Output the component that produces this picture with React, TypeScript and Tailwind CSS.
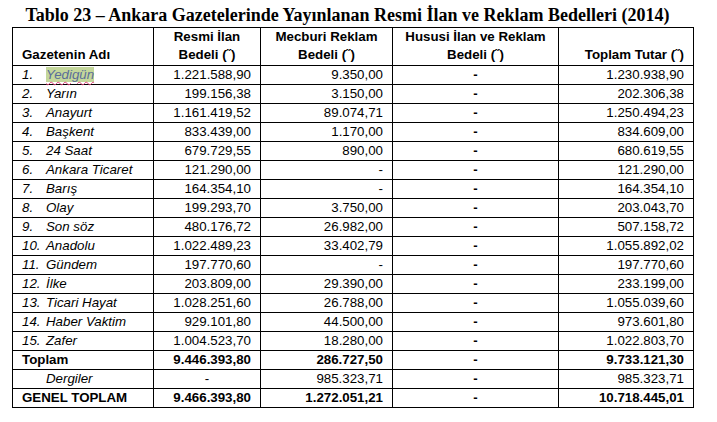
import React from 'react';

type Row = { no?: string; name: string; resmi: string; mecburi: string; hususi: string; toplam: string; kind?: 'bold' | 'sub' | 'hl' };

const rows: Row[] = [
  { no: '1.', name: 'Yedigün', resmi: '1.221.588,90', mecburi: '9.350,00', hususi: '-', toplam: '1.230.938,90', kind: 'hl' },
  { no: '2.', name: 'Yarın', resmi: '199.156,38', mecburi: '3.150,00', hususi: '-', toplam: '202.306,38' },
  { no: '3.', name: 'Anayurt', resmi: '1.161.419,52', mecburi: '89.074,71', hususi: '-', toplam: '1.250.494,23' },
  { no: '4.', name: 'Başkent', resmi: '833.439,00', mecburi: '1.170,00', hususi: '-', toplam: '834.609,00' },
  { no: '5.', name: '24 Saat', resmi: '679.729,55', mecburi: '890,00', hususi: '-', toplam: '680.619,55' },
  { no: '6.', name: 'Ankara Ticaret', resmi: '121.290,00', mecburi: '-', hususi: '-', toplam: '121.290,00' },
  { no: '7.', name: 'Barış', resmi: '164.354,10', mecburi: '-', hususi: '-', toplam: '164.354,10' },
  { no: '8.', name: 'Olay', resmi: '199.293,70', mecburi: '3.750,00', hususi: '-', toplam: '203.043,70' },
  { no: '9.', name: 'Son söz', resmi: '480.176,72', mecburi: '26.982,00', hususi: '-', toplam: '507.158,72' },
  { no: '10.', name: 'Anadolu', resmi: '1.022.489,23', mecburi: '33.402,79', hususi: '-', toplam: '1.055.892,02' },
  { no: '11.', name: 'Gündem', resmi: '197.770,60', mecburi: '-', hususi: '-', toplam: '197.770,60' },
  { no: '12.', name: 'İlke', resmi: '203.809,00', mecburi: '29.390,00', hususi: '-', toplam: '233.199,00' },
  { no: '13.', name: 'Ticari Hayat', resmi: '1.028.251,60', mecburi: '26.788,00', hususi: '-', toplam: '1.055.039,60' },
  { no: '14.', name: 'Haber Vaktim', resmi: '929.101,80', mecburi: '44.500,00', hususi: '-', toplam: '973.601,80' },
  { no: '15.', name: 'Zafer', resmi: '1.004.523,70', mecburi: '18.280,00', hususi: '-', toplam: '1.022.803,70' },
  { name: 'Toplam', resmi: '9.446.393,80', mecburi: '286.727,50', hususi: '-', toplam: '9.733.121,30', kind: 'bold' },
  { name: 'Dergiler', resmi: '-', mecburi: '985.323,71', hususi: '-', toplam: '985.323,71', kind: 'sub' },
  { name: 'GENEL TOPLAM', resmi: '9.466.393,80', mecburi: '1.272.051,21', hususi: '-', toplam: '10.718.445,01', kind: 'bold' },
];

const cell = 'border border-black px-0 py-0 leading-[18px]';

function NameCell({ row }: { row: Row }) {
  if (row.kind === 'bold') return <span className="font-bold">{row.name}</span>;
  if (row.kind === 'sub') return <span className="pl-[24px] italic">{row.name}</span>;
  return (
    <span className="italic">
      <span className="inline-block w-[24px]">{row.no}</span>
      {row.kind === 'hl' ? (
        <span className="bg-[#c4d79b] text-[#5a6d99] underline decoration-wavy decoration-[#e0407a] decoration-1 underline-offset-2">
          {row.name}
        </span>
      ) : (
        row.name
      )}
    </span>
  );
}

export default function App() {
  return (
    <div className="w-[717px] h-[422px] bg-white text-black font-['Liberation_Sans',Arial,sans-serif] text-[13.3px]">
      <div className="w-[681px] ml-[12px] pt-[3px]">
        <h1 className="text-center pr-[10px] font-['Liberation_Serif','Times_New_Roman',serif] font-bold text-[18px] leading-[24px]">
          Tablo 23 – Ankara Gazetelerinde Yayınlanan Resmi İlan ve Reklam Bedelleri (2014)
        </h1>
        <table className="w-[681px] border-collapse table-fixed">
          <colgroup>
            <col className="w-[141px]" />
            <col className="w-[107px]" />
            <col className="w-[132px]" />
            <col className="w-[166px]" />
            <col className="w-[135px]" />
          </colgroup>
          <thead>
            <tr className="h-[38px] font-bold">
              <th className={`${cell} align-bottom text-left pl-[9px] pb-[1px] font-bold`}>Gazetenin Adı</th>
              <th className={`${cell} align-bottom text-center pb-[1px] font-bold`}>
                Resmi İlan
                <br />
                Bedeli (˝)
              </th>
              <th className={`${cell} align-bottom text-center pb-[1px] font-bold`}>
                Mecburi Reklam
                <br />
                Bedeli (˝)
              </th>
              <th className={`${cell} align-bottom text-center pb-[1px] font-bold`}>
                Hususi İlan ve Reklam
                <br />
                Bedeli (˝)
              </th>
              <th className={`${cell} align-bottom text-right pr-[9px] pb-[1px] font-bold`}>Toplam Tutar (˝)</th>
            </tr>
          </thead>
          <tbody>
            {rows.map((row) => {
              const bold = row.kind === 'bold' ? 'font-bold' : '';
              return (
                <tr key={row.name} className="h-[19px]">
                  <td className={`${cell} pl-[9px] text-left`}>
                    <NameCell row={row} />
                  </td>
                  <td className={`${cell} ${bold} ${row.resmi === '-' ? 'text-center' : 'text-right pr-[9px]'}`}>{row.resmi}</td>
                  <td className={`${cell} ${bold} text-right pr-[9px]`}>{row.mecburi}</td>
                  <td className={`${cell} font-bold text-center`}>{row.hususi}</td>
                  <td className={`${cell} ${bold} text-right pr-[9px]`}>{row.toplam}</td>
                </tr>
              );
            })}
          </tbody>
        </table>
      </div>
    </div>
  );
}
